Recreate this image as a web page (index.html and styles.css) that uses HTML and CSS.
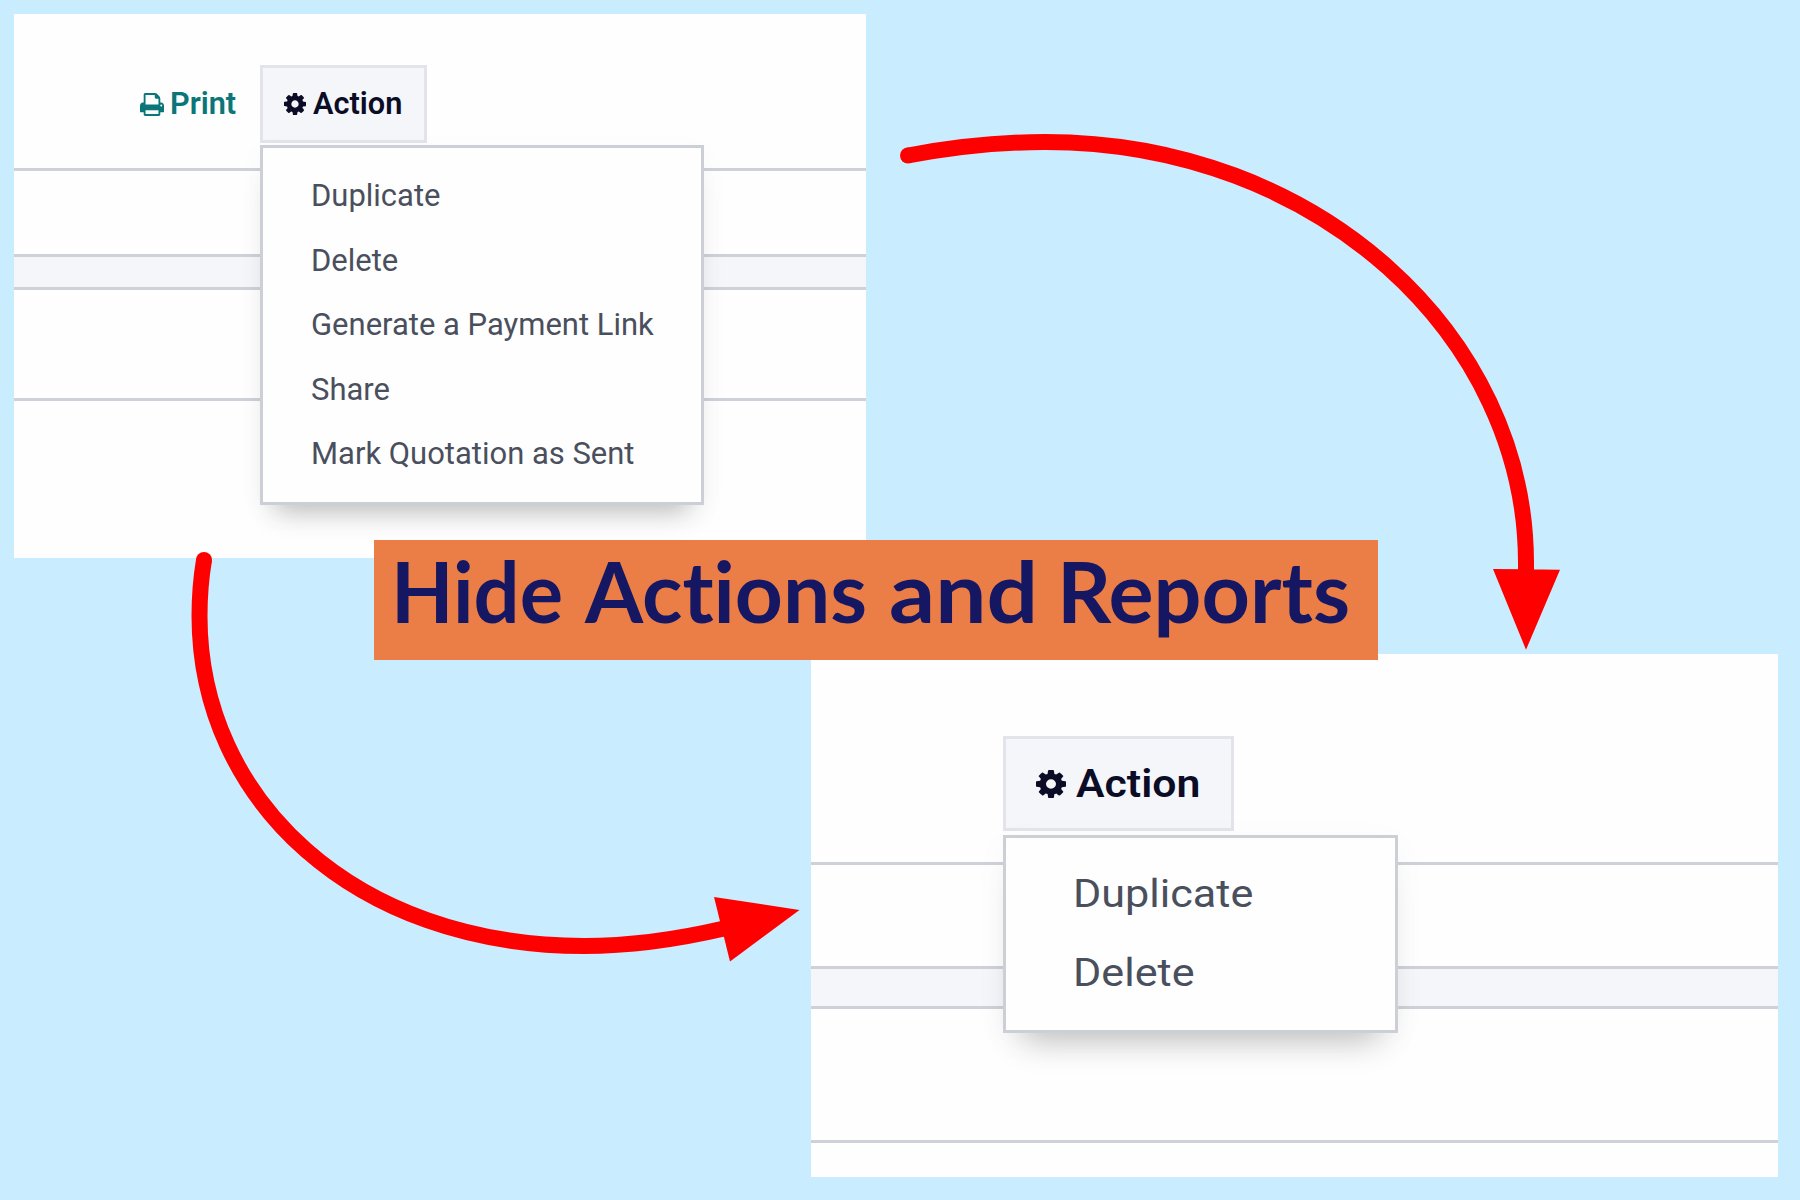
FILE: index.html
```html
<!DOCTYPE html>
<html lang="en">
<head>
<meta charset="utf-8">
<title>Hide Actions and Reports</title>
<link rel="stylesheet" href="styles.css">
</head>
<body>
<svg class="defs" width="0" height="0" aria-hidden="true">
  <symbol id="cog" viewBox="128 128 1536 1536" preserveAspectRatio="none"><path d="M1152 896q0-106-75-181t-181-75-181 75-75 181 75 181 181 75 181-75 75-181zm512-109v222q0 12-8 23t-20 13l-185 28q-19 54-39 91 35 50 107 138 10 12 10 25t-9 23q-27 37-99 108t-94 71q-12 0-26-9l-138-108q-44 23-91 38-16 136-29 186-7 28-36 28h-222q-14 0-24.5-8.5t-11.5-21.5l-28-184q-49-16-90-37l-141 107q-10 9-25 9-14 0-25-11-126-114-165-168-7-10-7-23 0-12 8-23 15-21 51-66.5t54-70.5q-27-50-41-99l-183-27q-13-2-21-12.5t-8-23.5v-222q0-12 8-23t19-13l186-28q14-46 39-92-40-57-107-138-10-12-10-24 0-10 9-23 26-36 98.5-107.5t94.5-71.5q13 0 26 10l138 107q44-23 91-38 16-136 29-186 7-28 36-28h222q14 0 24.5 8.5t11.5 21.5l28 184q49 16 90 37l142-107q9-9 24-9 13 0 25 10 129 119 165 170 7 8 7 22 0 12-8 23-15 21-51 66.5t-54 70.5q26 50 41 98l183 28q13 2 21 12.5t8 23.5z"/></symbol>
  <symbol id="print" viewBox="64 128 1664 1536" preserveAspectRatio="none"><path d="M448 1536h896v-256h-896v256zm0-640h896v-384h-160q-40 0-68-28t-28-68v-160h-640v640zm1152 64q0-26-19-45t-45-19-45 19-19 45 19 45 45 19 45-19 19-45zm128 0v416q0 13-9.5 22.5t-22.5 9.5h-224v160q0 40-28 68t-68 28h-960q-40 0-68-28t-28-68v-160h-224q-13 0-22.5-9.5t-9.5-22.5v-416q0-79 56.5-135.5t135.5-56.5h64v-544q0-40 28-68t68-28h672q40 0 88 20t76 48l152 152q28 28 48 76t20 88v256h64q79 0 135.5 56.5t56.5 135.5z"/></symbol>
</svg>
<main class="poster">
  <section class="panel before">
    <header class="bar">
      <span class="print"><svg><use href="#print"/></svg><b>Print</b></span>
      <div class="button"><svg><use href="#cog"/></svg><b>Action</b></div>
    </header>
    <div class="row first"></div>
    <div class="row band"></div>
    <div class="row last"></div>
    <ul class="menu">
      <li><span>Duplicate</span></li>
      <li><span>Delete</span></li>
      <li><span>Generate a Payment Link</span></li>
      <li><span>Share</span></li>
      <li><span>Mark Quotation as Sent</span></li>
    </ul>
  </section>
  <section class="panel after">
    <header class="bar">
      <div class="button"><svg><use href="#cog"/></svg><b>Action</b></div>
    </header>
    <div class="row first"></div>
    <div class="row band"></div>
    <div class="row last"></div>
    <ul class="menu">
      <li><span>Duplicate</span></li>
      <li><span>Delete</span></li>
    </ul>
  </section>
  <svg class="arrows" viewBox="0 0 1800 1200">
    <path class="line" d="M908 155.500C953 147 999 142 1045 142C1318 142 1526 336 1526 563"/>
    <path class="cap" d="M1518 560h16v9.500h-16zM1493 569l67 .7-34 80z"/>
    <path class="line" d="M204 560C201 578 199.500 597 199.500 616C199.500 800 355 946 584 946C632 946 679 939 724 928.500"/>
    <path class="cap" d="M714 897l85.500 13-69.500 51.500z"/>
    <circle class="cap" cx="908" cy="155.500" r="8"/>
    <circle class="cap" cx="204" cy="560" r="8"/>
  </svg>
  <svg class="title" viewBox="0 0 1004 120">
    <text x="17" y="83" textLength="172" lengthAdjust="spacingAndGlyphs">Hide</text>
    <text x="211" y="83" textLength="282" lengthAdjust="spacingAndGlyphs">Actions</text>
    <text x="515" y="83" textLength="149" lengthAdjust="spacingAndGlyphs">and</text>
    <text x="683" y="83" textLength="293" lengthAdjust="spacingAndGlyphs">Reports</text>
  </svg>
</main>
</body>
</html>
```
FILE: styles.css
```css
* { box-sizing: border-box; }
body { margin: 0; font-family: Roboto, "Liberation Sans", sans-serif; }
.defs { position: absolute; }
.poster {
  position: relative;
  width: 1800px;
  height: 1200px;
  overflow: hidden;
  background: #c9edfe;
}
.panel { position: absolute; background: #fefefe; }
.before { left: 14px; top: 14px; width: 852px; height: 544px; }
.after { left: 811px; top: 654px; width: 967px; height: 523px; }
.bar, .row { border-bottom: 3px solid #cfd1d9; }
.bar { display: flex; align-items: flex-start; }
.band { background: #f5f6fa; }
.button {
  display: flex;
  align-items: center;
  background: #f5f6fa;
  border: 3px solid #e3e4e9;
  color: #0b0d26;
}
b {
  display: block;
  font-weight: 600;
  white-space: nowrap;
  transform-origin: left center;
}
svg use { fill: currentColor; }
.menu {
  position: absolute;
  margin: 0;
  list-style: none;
  background: #fefefe;
  border: 3px solid #cdcfd7;
  color: #4a4f5d;
}
.menu li { display: flex; align-items: center; white-space: nowrap; }
.menu span { transform-origin: left center; }

.before .bar { height: 157px; padding: 51px 0 0 126px; }
.print {
  display: flex;
  align-items: center;
  width: 120px;
  height: 78px;
  color: #0b7678;
}
.print svg { width: 24px; height: 23px; margin-right: 6px; }
.before b { font-size: 31px; line-height: 40px; transform: scaleX(.99); }
.before .button { width: 167px; height: 78px; padding-left: 21px; }
.before .button svg { width: 22px; height: 22px; margin-right: 7px; }
.before .first { height: 86px; }
.before .band { height: 33px; }
.before .last { height: 111px; }
.before .menu {
  left: 246px;
  top: 131px;
  width: 444px;
  height: 360px;
  padding: 14px 0 0 48px;
  font-size: 32px;
  box-shadow: 0 22px 26px -16px rgba(0, 0, 0, .26), 0 8px 28px rgba(0, 0, 0, .03);
}
.before li { height: 66px; }
.before li:nth-child(even) { height: 63px; }
.before .menu span { transform: scaleX(.968); }

.after .bar { height: 211px; padding: 82px 0 0 192px; }
.after .button { width: 231px; height: 95px; padding-left: 30px; }
.after .button svg { width: 30px; height: 28px; margin-right: 10px; }
.after b { font-size: 38px; line-height: 46px; transform: scaleX(1.125); }
.after .first { height: 104px; }
.after .band { height: 40px; }
.after .last { height: 134px; }
.after .menu {
  left: 192px;
  top: 181px;
  width: 395px;
  height: 198px;
  padding: 16px 0 0 67px;
  font-size: 38px;
  box-shadow: 0 26px 32px -20px rgba(0, 0, 0, .26), 0 8px 34px rgba(0, 0, 0, .03);
}
.after li { height: 79px; }
.after .menu span { transform: scaleX(1.135); }

.arrows { position: absolute; inset: 0; width: 1800px; height: 1200px; }
.line { fill: none; stroke: #f00; stroke-width: 16; }
.cap { fill: #f00; }
.title {
  position: absolute;
  left: 374px;
  top: 540px;
  width: 1004px;
  height: 120px;
  background: #eb7e46;
  fill: #151763;
  font: 700 85px Lato, "Open Sans", sans-serif;
  font-variant-ligatures: none;
}
```
